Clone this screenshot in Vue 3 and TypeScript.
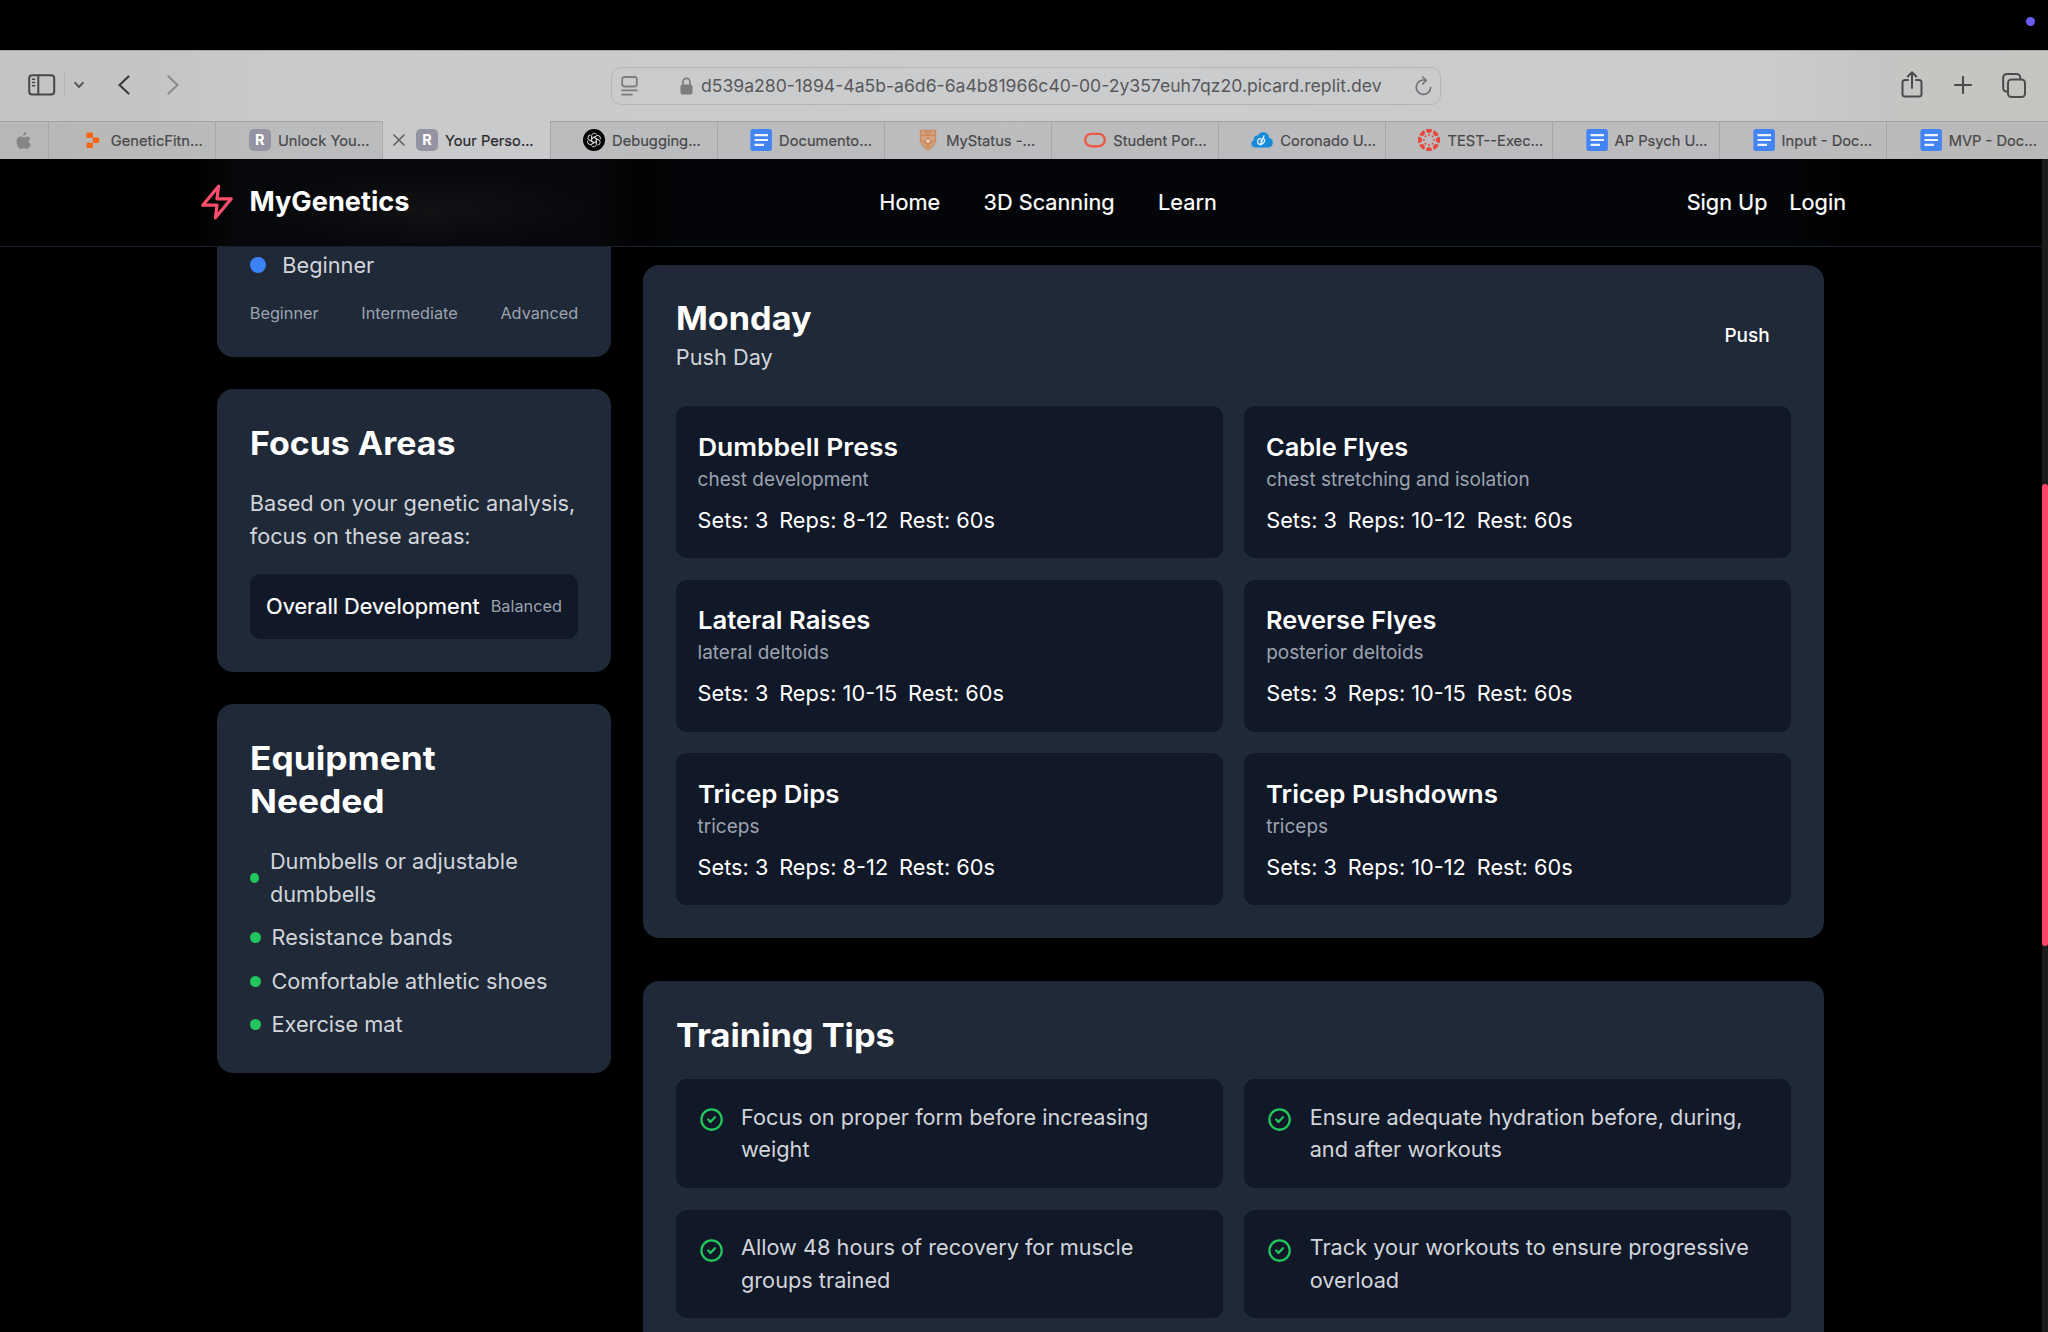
<script setup lang="ts">
interface Tab { icon: string; title: string; active?: boolean }
interface Exercise { name: string; target: string; reps: string; stretch: number }

const tabs: Tab[] = [
  { icon: 'replit', title: 'GeneticFitn...' },
  { icon: 'r', title: 'Unlock You...' },
  { icon: 'r', title: 'Your Perso...', active: true },
  { icon: 'gpt', title: 'Debugging...' },
  { icon: 'doc', title: 'Documento...' },
  { icon: 'shield', title: 'MyStatus -...' },
  { icon: 'oracle', title: 'Student Por...' },
  { icon: 'cloud', title: 'Coronado U...' },
  { icon: 'canvas', title: 'TEST--Exec...' },
  { icon: 'doc', title: 'AP Psych U...' },
  { icon: 'doc', title: 'Input - Doc...' },
  { icon: 'doc', title: 'MVP - Doc...' },
]
const exercises: Exercise[] = [
  { name: 'Dumbbell Press', target: 'chest development', reps: '8-12', stretch: 1.083 },
  { name: 'Cable Flyes', target: 'chest stretching and isolation', reps: '10-12', stretch: 1.038 },
  { name: 'Lateral Raises', target: 'lateral deltoids', reps: '10-15', stretch: 1.05 },
  { name: 'Reverse Flyes', target: 'posterior deltoids', reps: '10-15', stretch: 1.036 },
  { name: 'Tricep Dips', target: 'triceps', reps: '8-12', stretch: 1.058 },
  { name: 'Tricep Pushdowns', target: 'triceps', reps: '10-12', stretch: 1.06 },
]
const equipment: string[] = ['Dumbbells or adjustable dumbbells', 'Resistance bands', 'Comfortable athletic shoes', 'Exercise mat']
const tips: string[] = [
  'Focus on proper form before increasing weight',
  'Ensure adequate hydration before, during, and after workouts',
  'Allow 48 hours of recovery for muscle groups trained',
  'Track your workouts to ensure progressive overload',
]
const spokes: number[] = [0, 45, 90, 135, 180, 225, 270, 315]
const petals: number[] = [0, 60, 120, 180, 240, 300]
</script>

<template>
  <div class="screen">
    <div class="menubar"><span class="indicator"></span></div>

    <div class="toolbar">
      <div class="tools-left">
        <svg class="i-side" width="28" height="22" viewBox="0 0 28 22" fill="none" stroke="#48484a" stroke-width="2">
          <rect x="1.2" y="1.2" width="25" height="19.300" rx="3" />
          <path d="M10.3 1.2V20.500" />
          <path d="M4 5.300h3.200M4 8.500h3.200M4 11.700h3.200" stroke-width="1.400" />
        </svg>
        <span class="split"></span>
        <svg class="i-chev" width="10" height="8" viewBox="0 0 10 8" fill="none" stroke="#58585a" stroke-width="2" stroke-linecap="round" stroke-linejoin="round"><path d="M1.2 1.8L5 6l3.800-4.200" /></svg>
        <svg class="i-back" width="12" height="20" viewBox="0 0 12 20" fill="none" stroke="#3c3c3e" stroke-width="2.200" stroke-linecap="round" stroke-linejoin="round"><path d="M10.500 1.500L1.500 10l9 8.500" /></svg>
        <svg class="i-fwd" width="12" height="20" viewBox="0 0 12 20" fill="none" stroke="#8b8c8d" stroke-width="2.200" stroke-linecap="round" stroke-linejoin="round"><path d="M1.500 1.500l9 8.500-9 8.500" /></svg>
      </div>
      <div class="address">
        <svg width="17" height="20" viewBox="0 0 17 20" fill="none" stroke="#7c7d7f" stroke-width="1.800" stroke-linecap="round"><rect x="1.200" y="1" width="14.600" height="9.500" rx="2.200" /><path d="M1 14.400h15M1 18.700h10" /></svg>
        <div class="url">
          <svg width="13" height="18" viewBox="0 0 13 18"><path d="M3 8V5a3.500 3.700 0 017 0v3" fill="none" stroke="#7c7d7f" stroke-width="1.700" /><rect x=".5" y="7.500" width="12" height="10" rx="2" fill="#7c7d7f" /></svg>
          <span>d539a280-1894-4a5b-a6d6-6a4b81966c40-00-2y357euh7qz20.picard.replit.dev</span>
        </div>
        <svg width="17" height="20" viewBox="0 0 17 20" fill="none" stroke="#737476" stroke-width="1.700" stroke-linecap="round" stroke-linejoin="round"><path d="M10.500 4.300A7.200 7.200 0 1015.700 11.500M7.800 1l3.400 3.300-3.400 3.500" /></svg>
      </div>
      <div class="tools-right">
        <svg width="22" height="28" viewBox="0 0 22 28" fill="none" stroke="#4b4b4c" stroke-width="2" stroke-linecap="round" stroke-linejoin="round"><path d="M7 9H4a2.500 2.500 0 00-2.500 2.500V23A2.500 2.500 0 004 25.500h14a2.500 2.500 0 002.500-2.500V11.500A2.500 2.500 0 0018 9h-3M11 17V1.500M6.800 5.500L11 1.300l4.200 4.200" /></svg>
        <svg width="18" height="18" viewBox="0 0 18 18" fill="none" stroke="#4b4b4c" stroke-width="2.100" stroke-linecap="round"><path d="M9 1v16M1 9h16" /></svg>
        <svg width="24" height="25" viewBox="0 0 24 25" fill="none" stroke="#4b4b4c" stroke-width="2"><rect x="6" y="6.500" width="17" height="17.500" rx="3.500" /><path d="M6 18.500H4.500A3.200 3.200 0 011.200 15V4.500A3.500 3.500 0 014.700 1h10A3.500 3.500 0 0118.200 4.500V6.500" /></svg>
      </div>
    </div>

    <div class="tabs">
      <div class="pinned">
        <svg width="15" height="18" viewBox="0 0 15 18" fill="#858585"><path d="M10.300 0c.1 1.900-1.400 3.700-3.200 3.700C6.900 1.900 8.600.2 10.300 0zM14.300 6.200c-2.400 1.500-2 4.800.6 5.900-.7 2.200-2.300 4.900-4 4.900-1.200 0-1.600-.7-3-.7s-1.900.7-3 .7C2.800 17 .5 13.200.5 9.800c0-3.500 2.200-5.400 4.300-5.400 1.300 0 2.400.9 3.200.9.800 0 2-.9 3.600-.9 1 0 2.100.6 2.700 1.800z" /></svg>
      </div>
      <div v-for="(t, n) in tabs" :key="n" class="tab" :class="{ active: t.active }">
        <span class="close"><svg v-if="t.active" width="12" height="12" viewBox="0 0 12 12" stroke="#5f6062" stroke-width="1.600" stroke-linecap="round"><path d="M1 1l10 10M11 1L1 11" /></svg></span>
        <span v-if="t.icon === 'r'" class="r">R</span>
        <svg v-else width="22" height="22" viewBox="0 0 22 22" fill="none">
          <g v-if="t.icon === 'replit'" fill="#fb6412"><rect x="4.500" y="3.500" width="6.500" height="5.400" rx="1" /><rect x="10.700" y="8.600" width="6.500" height="5.400" rx="1" /><rect x="4.500" y="13.700" width="6.500" height="5.400" rx="1" /></g>
          <g v-else-if="t.icon === 'gpt'">
            <circle cx="11" cy="11" r="11" fill="#050505" />
            <g stroke="#cfcfcf" stroke-width="1"><path v-for="p in petals" :key="p" :transform="`rotate(${p} 11 11)`" d="M8.600 12.300V6.700a2.700 2.700 0 015-1.200M8.600 9.800l4.800-2.800" /></g>
          </g>
          <g v-else-if="t.icon === 'doc'"><rect x=".4" width="21.500" height="22" rx="2.500" fill="#4384f4" /><path d="M4.500 6.100h13.500M4.500 11h13.500M4.500 15.900h9.500" stroke="#eef3fd" stroke-width="2.100" /></g>
          <g v-else-if="t.icon === 'shield'" stroke="#cf8a5e" stroke-width="1.500"><path d="M3.500 1.500h15v9c0 5.500-3.800 8-7.500 10.200C7.300 18.500 3.500 16 3.500 10.500z" fill="#cfa78c" /><path d="M4 6.500h14M8.500 2v4.500M11 2v4.500M13.500 2v4.500" /><path d="M11 8.500l3.500 3.500-3.500 3.500-3.500-3.500zM5.500 11l5.500 7.500 5.500-7.500" stroke-width="1.300" /><circle cx="11" cy="12" r="1.500" fill="#e9dcd2" stroke="none" /></g>
          <rect v-else-if="t.icon === 'oracle'" x="1.200" y="4.900" width="19.600" height="12.300" rx="6" stroke="#ea5a48" stroke-width="2.400" />
          <g v-else-if="t.icon === 'cloud'"><path d="M4.500 18.500C1.800 18.500.3 16.800.3 14.700c0-1.700 1-3 2.500-3.500C2.300 8.500 4 6.300 6.800 6.500 7.800 4.200 10 3 12.500 3.200c3.500.3 5.500 2.500 5.700 5.600 2.200.7 3.600 2.400 3.600 4.900 0 2.900-1.900 4.800-4.500 4.800z" fill="#168bdc" /><path d="M13 6.800L9.300 16M9.500 9.300c-3.500.5-4 6 0 6.200 4-.3 5.500-5.500 2.800-5.800-2 0-3 3-1.300 3.300" stroke="#e3f0f9" stroke-width="1.300" stroke-linecap="round" /></g>
          <g v-else fill="#e8483a"><g v-for="s in spokes" :key="s" :transform="`rotate(${s} 11 11)`"><path d="M7.800 .4a11 11 0 016.400 0c-.3 4.900-6.100 4.900-6.400 0z" /><circle cx="11" cy="5.900" r="1" /></g></g>
        </svg>
        <span class="tab-title">{{ t.title }}</span>
      </div>
    </div>

    <div class="viewport">
      <div class="site">
        <header class="nav">
          <div class="nav-inner">
            <div class="brand">
              <svg class="zap" viewBox="0 0 24 24" fill="none" stroke="#ff4d6d" stroke-width="2" stroke-linecap="round" stroke-linejoin="round"><path d="M13 2L3 14h9l-1 8 10-12h-9l1-8z" /></svg>
              <span>MyGenetics</span>
            </div>
            <nav class="links"><a>Home</a><a>3D Scanning</a><a>Learn</a></nav>
            <div class="auth"><a>Sign Up</a><a>Login</a></div>
          </div>
        </header>

        <main class="content">
          <aside class="sidebar">
            <section class="card level">
              <div class="level-row"><span class="level-dot"></span><span>Beginner</span></div>
              <div class="level-scale"><span>Beginner</span><span>Intermediate</span><span>Advanced</span></div>
            </section>
            <section class="card">
              <h2>Focus Areas</h2>
              <p class="lead">Based on your genetic analysis, focus on these areas:</p>
              <div class="focus"><span>Overall Development</span><small>Balanced</small></div>
            </section>
            <section class="card">
              <h2 class="equip">Equipment<br>Needed</h2>
              <ul><li v-for="e in equipment" :key="e"><span class="dot"></span><span>{{ e }}</span></li></ul>
            </section>
          </aside>

          <div class="plan">
            <section class="card">
              <div class="day">
                <div><h2>Monday</h2><p>Push Day</p></div>
                <span class="badge">Push</span>
              </div>
              <div class="grid">
                <article v-for="x in exercises" :key="x.name" class="tile">
                  <h3 :style="{ transform: `scaleX(${x.stretch})` }">{{ x.name }}</h3>
                  <p>{{ x.target }}</p>
                  <div class="stats"><span>Sets: 3</span><span>Reps: {{ x.reps }}</span><span>Rest: 60s</span></div>
                </article>
              </div>
            </section>
            <section class="card">
              <h2 class="tips-title">Training Tips</h2>
              <div class="grid">
                <div v-for="tip in tips" :key="tip" class="tile tip">
                  <svg viewBox="0 0 24 24" fill="none" stroke="#22c55e" stroke-width="2" stroke-linecap="round" stroke-linejoin="round"><path d="M9 12l2 2 4-4m6 2a9 9 0 11-18 0 9 9 0 0118 0z" /></svg>
                  <span>{{ tip }}</span>
                </div>
              </div>
            </section>
          </div>
        </main>
      </div>
      <div class="scrollbar"><div class="thumb"></div></div>
    </div>
  </div>
</template>

<style>
html { font-size: 21.720px; background: #000; }
body { margin: 0; overflow: hidden; }
</style>

<style scoped>
* { box-sizing: border-box; }
h2, h3, p, ul { margin: 0; padding: 0; }
svg { display: block; flex: none; }
.screen { width: 2048px; height: 1332px; overflow: hidden; display: flex; flex-direction: column; background: #000; color: #fff; font-family: Inter, "Liberation Sans", sans-serif; line-height: 1.5; }
.menubar { height: 50px; flex: none; display: flex; justify-content: flex-end; padding: 17px 13px 0 0; }
.indicator { width: 9px; height: 9px; border-radius: 50%; background: #6a5df5; }

.toolbar { height: 71px; flex: none; display: flex; align-items: center; justify-content: space-between; background: linear-gradient(90deg, #c4c4c2 0, #c5c5c4 160px, #c9cacc 270px, #cbccce 1000px, #cacbcd 1780px, #c5c5c3 1880px, #c4c4c1 100%); border-top: 1px solid #a6a7a7; }
.tools-left { display: flex; align-items: center; width: 610.500px; padding: 0 0 2px 28px; }
.split { width: 1px; height: 24px; margin-left: 8px; background: #b6b6b5; }
.i-chev { margin-left: 9px; }
.i-back { margin-left: 34px; }
.i-fwd { margin-left: 37px; }
.address { width: 830px; height: 38px; display: flex; align-items: center; justify-content: space-between; padding: 0 8px 0 9.500px; border: 1.500px solid #b4b6b8; border-radius: 10px; }
.url { display: flex; align-items: center; gap: 8px; margin-left: 9px; font-size: 17.600px; color: #58595b; white-space: nowrap; }
.tools-right { display: flex; align-items: center; justify-content: flex-end; gap: 30.500px; width: 607.500px; padding: 0 22px 2px 0; }

.tabs { height: 37.500px; flex: none; display: flex; background: linear-gradient(90deg, #b7b7b5, #bbbcbd 300px, #bcbcbe 1800px, #b8b8b6); }
.pinned { width: 48.300px; flex: none; display: flex; align-items: center; padding: 1px 0 0 16px; border-top: 1px solid #a3a4a4; }
.tab { width: 167.080px; flex: none; display: flex; align-items: center; border-left: 1px solid #a6a7a8; border-top: 1px solid #a3a4a4; white-space: nowrap; }
.tab.active { background: #c9cacb; border-top-color: #c9cacb; }
.close { width: 32.500px; flex: none; padding-left: 10px; }
.tab-title { margin: 1px 0 0 7px; font-size: 14.700px; color: #48484a; -webkit-text-stroke: .2px currentColor; }
.active .tab-title { color: #29292b; }
.r { width: 22px; height: 22px; flex: none; border-radius: 5px; background: #9493a2; color: #fff; font-size: 14.500px; line-height: 22px; font-weight: 700; text-align: center; }

.viewport { flex: 1; min-height: 0; display: flex; }
.site { flex: 1; min-width: 0; height: 100%; overflow: hidden; }
.scrollbar { width: 6.500px; flex: none; background: #1b1b1b; padding-top: 325px; }
.thumb { height: 462px; background: #ff4668; border-radius: 4px; }

.nav { height: 88px; border-bottom: 1.350px solid #17212e; background: radial-gradient(ellipse 170px 40px at 430px 50px, #111214, transparent), linear-gradient(90deg, #000 195px, #07080b 240px, #07080b 590px, #020203 640px, #040508 690px, #040508 1780px, #000 1850px); }
.nav-inner { width: 1648px; height: 100%; margin-left: 198px; display: flex; align-items: center; justify-content: space-between; padding-top: 1px; -webkit-text-stroke: .2px currentColor; }
.brand { display: flex; align-items: center; gap: .620rem; font-size: 1.250rem; font-weight: 700; -webkit-text-stroke: 0; }
.zap { width: 1.750rem; height: 1.750rem; }
.links { display: flex; gap: 2rem; }
.auth { display: flex; gap: 1rem; }

.content { width: 1606.800px; margin-left: 217.200px; display: flex; gap: 32.500px; align-items: flex-start; }
.sidebar { flex: 1 1 0; min-width: 0; display: flex; flex-direction: column; gap: 1.500rem; }
.plan { flex: 3 1 0; min-width: 0; padding-top: 18.200px; display: flex; flex-direction: column; gap: 2rem; }
.card { background: #1f2937; border-radius: .750rem; padding: 1.500rem; }
.level { height: 110.200px; padding-top: 2.300px; border-radius: 0 0 .750rem .750rem; color: #d1d5db; }
.level-row { display: flex; align-items: center; gap: .750rem; }
.level-dot { width: .750rem; height: .750rem; border-radius: 50%; background: #3b82f6; }
.level-scale { margin-top: 1rem; display: flex; justify-content: space-between; font-size: .750rem; line-height: 1rem; color: #9ca3af; }
h2, h3 { width: fit-content; white-space: nowrap; transform-origin: left center; }
h2 { font-size: 1.500rem; line-height: 2rem; font-weight: 750; margin-bottom: 1rem; transform: scaleX(1.042); }
h2.equip { transform: scaleX(1.085); }
h2.tips-title { transform: scaleX(1.055); }
.lead { color: #d1d5db; margin-bottom: 1rem; }
.focus { height: 3rem; padding: 0 .750rem; display: flex; align-items: center; justify-content: space-between; white-space: nowrap; background: #111827; border-radius: .500rem; }
.focus span { -webkit-text-stroke: .2px currentColor; }
.focus small { font-size: .750rem; color: #9ca3af; }
ul { list-style: none; display: flex; flex-direction: column; gap: .500rem; color: #d1d5db; }
li { display: flex; align-items: center; }
.dot { width: .500rem; height: .500rem; margin-right: .500rem; border-radius: 50%; background: #22c55e; }
.day { display: flex; justify-content: space-between; align-items: center; margin-bottom: 1.500rem; color: #d1d5db; }
.day h2 { margin: 0; color: #fff; transform: scaleX(1.050); }
.badge { padding: .080rem 1rem 0; font-size: .875rem; font-weight: 500; color: #fff; }
.grid { display: grid; grid-template-columns: 1fr 1fr; gap: 1rem; }
.tile { background: #111827; border-radius: .500rem; padding: 1rem; }
h3 { font-size: 1.125rem; line-height: 1.750rem; font-weight: 600; }
.tile p { font-size: .875rem; line-height: 1.250rem; color: #9ca3af; }
.stats { display: flex; gap: .500rem; margin-top: .500rem; }
.tip { display: flex; gap: .750rem; color: #d1d5db; }
.tip svg { width: 1.250rem; height: 1.250rem; margin-top: .250rem; }
</style>
